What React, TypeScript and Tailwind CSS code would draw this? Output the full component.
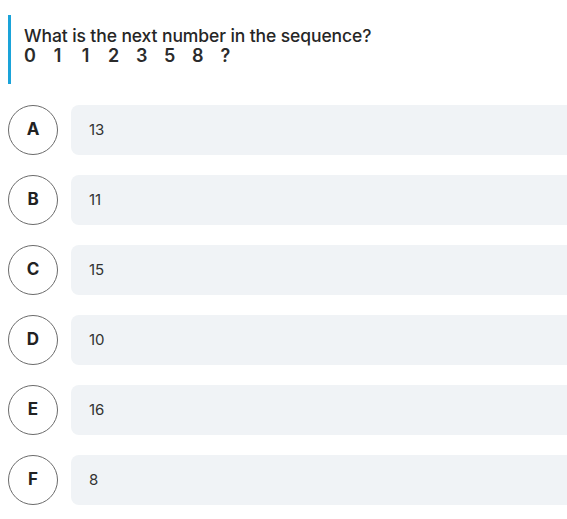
const opciones = [
  { letra: "A", valor: "13" },
  { letra: "B", valor: "11" },
  { letra: "C", valor: "15" },
  { letra: "D", valor: "10" },
  { letra: "E", valor: "16" },
  { letra: "F", valor: "8" },
];

const secuencia = ["0", "1", "1", "2", "3", "5", "8", "?"];

export default function App() {
  return (
    <div
      className="w-[567px] h-[519px] overflow-hidden bg-white text-[#2b2b2b]"
      style={{ fontFamily: "Inter, 'Open Sans', sans-serif" }}
    >
      {/* PREGUNTA */}
      <div className="ml-[8px] mt-[15px] h-[69px] border-l-[3px] border-[#1aa3d9] pl-[13px] pt-[10px]">
        <p className="text-[17.5px] leading-[21px] font-medium tracking-[-0.1px] text-[#262626]">
          What is the next number in the sequence?
        </p>
        <div className="flex gap-[17px] text-[18px] leading-[20px] font-semibold">
          {secuencia.map((n, i) => (
            <span key={i} className="w-[11px] text-center">
              {n}
            </span>
          ))}
        </div>
      </div>

      {/* OPCIONES */}
      <div className="mt-[21px] flex flex-col gap-[20px] pl-[8px]">
        {opciones.map((op) => (
          <div key={op.letra} className="flex items-center gap-[13px]">
            <div className="flex h-[50px] w-[50px] shrink-0 items-center justify-center rounded-full border border-[#6b6b6b] text-[17px] font-bold text-[#222]">
              {op.letra}
            </div>
            <div className="flex h-[50px] w-[520px] shrink-0 items-center rounded-[8px] bg-[#f0f3f6] pl-[18px] text-[15px] text-[#333]">
              {op.valor}
            </div>
          </div>
        ))}
      </div>
    </div>
  );
}
